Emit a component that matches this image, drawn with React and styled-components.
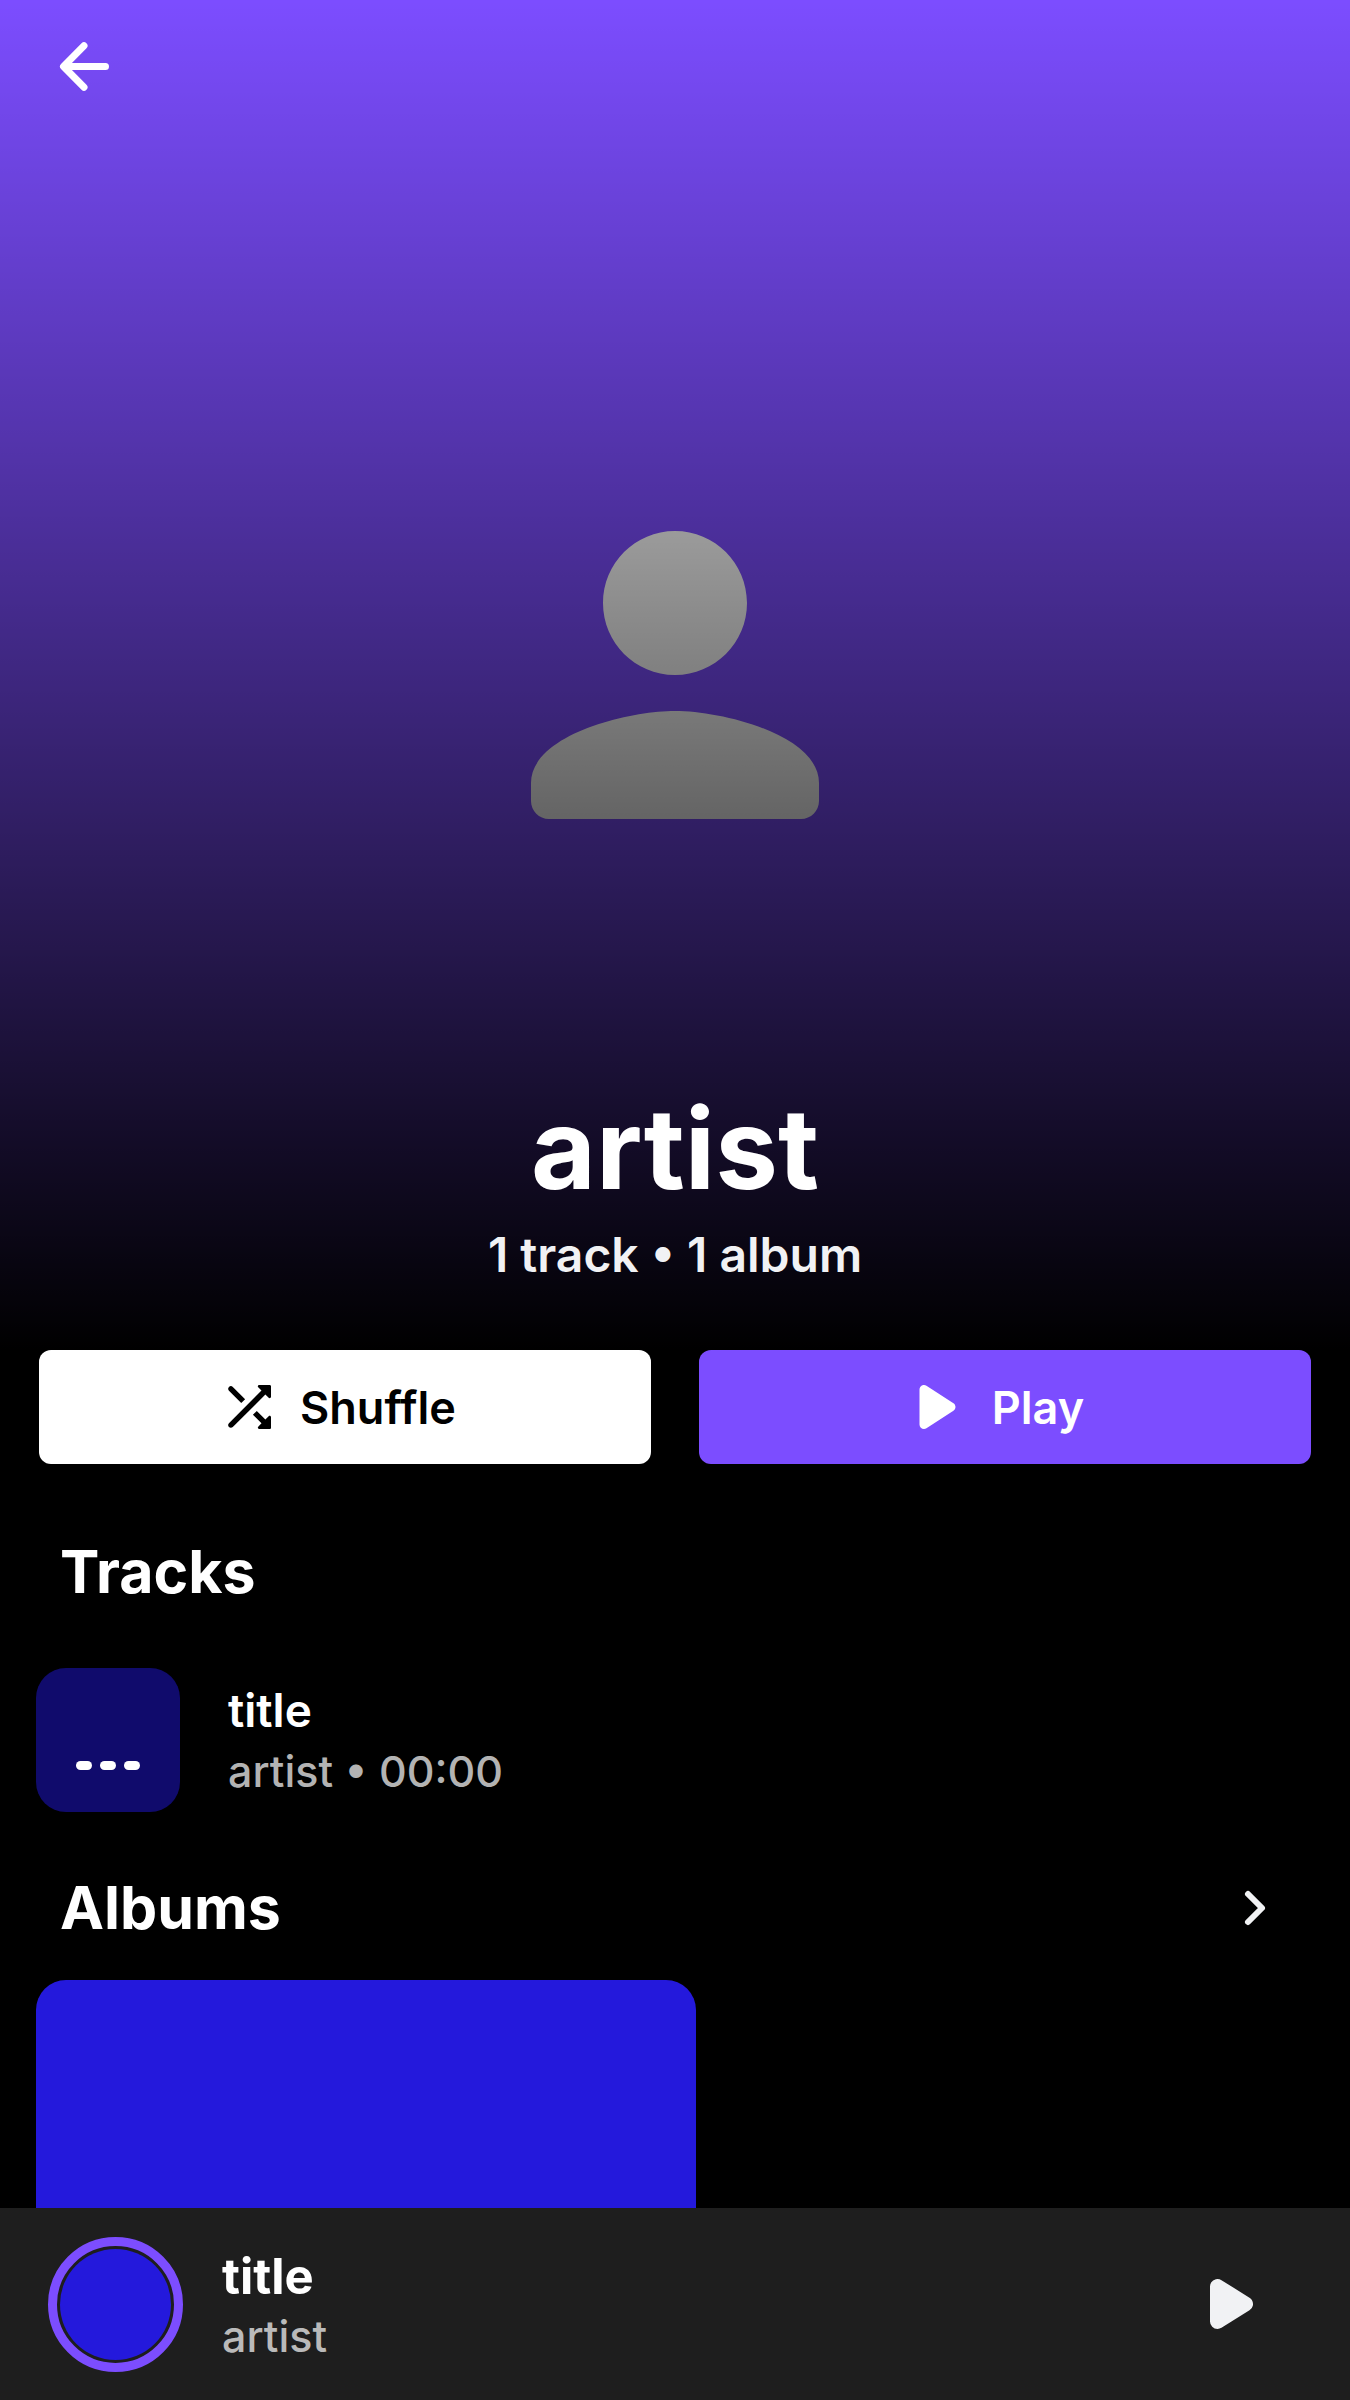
import React from "react";
import styled, { createGlobalStyle } from "styled-components";

const accent = "#7c4dff";
const cover = "#2419dc";

const GlobalStyle = createGlobalStyle`
  *, *::before, *::after { box-sizing: border-box; }
  body { margin: 0; background: #000; color: #fff; font-family: Inter, "Open Sans", sans-serif; }
  h1, h2, p { margin: 0; }
  button { font: inherit; color: inherit; border: 0; padding: 0; background: none; cursor: pointer; }
  svg { display: block; flex: none; }
`;

const Screen = styled.div`
  display: flex;
  flex-direction: column;
  height: 100vh;
`;

const Content = styled.main`
  flex: 1;
  min-height: 0;
  overflow-y: auto;
  scrollbar-width: none;
`;

const Hero = styled.header`
  display: grid;
  aspect-ratio: 1;
  background: ${accent};

  > * { grid-area: 1 / 1; }
`;

const Portrait = styled.svg`
  place-self: center;
  width: 32%;
`;

const Shade = styled.div`
  background: linear-gradient(to bottom, transparent, #000);
`;

const HeroBody = styled.div`
  display: flex;
  flex-direction: column;
  align-items: center;
  justify-content: space-between;
  padding: 30px 48px 62px;
`;

const IconButton = styled.button`
  && {
    display: flex;
    color: ${(p) => p.$color || "#fff"};
    align-self: ${(p) => p.$align || "center"};
  }
`;

const Heading = styled.div`
  text-align: center;
`;

const ArtistName = styled.h1`
  font-size: 112px;
  line-height: 148px;
  font-weight: 700;
`;

const Counts = styled.p`
  font-size: 48px;
  line-height: 66px;
  font-weight: 600;
  color: #f1f2f4;
`;

const Actions = styled.div`
  display: grid;
  grid-template-columns: 1fr 1fr;
  gap: 48px;
  padding: 0 39px 36px;
`;

const ActionButton = styled.button`
  && {
    display: flex;
    align-items: center;
    justify-content: center;
    gap: 18px;
    height: 114px;
    padding-right: 18px;
    border-radius: 12px;
    font-size: 45px;
    font-weight: 600;
    background: ${(p) => (p.$primary ? accent : "#fff")};
    color: ${(p) => (p.$primary ? "#fff" : "#000")};
  }
`;

const SectionHeader = styled.div`
  display: flex;
  align-items: center;
  justify-content: space-between;
  height: 144px;
  padding: 0 60px;
`;

const SectionTitle = styled.h2`
  font-size: 59px;
  line-height: 84px;
  font-weight: 700;
`;

const TrackRow = styled.button`
  && {
    display: flex;
    align-items: center;
    gap: 48px;
    width: 100%;
    padding: 24px 36px;
    text-align: left;
  }
`;

const TrackCover = styled.span`
  display: flex;
  align-items: flex-end;
  justify-content: center;
  gap: 8px;
  width: 144px;
  height: 144px;
  padding-bottom: 42px;
  border-radius: 30px;
  background: #100b6c;
`;

const Bar = styled.span`
  width: 16px;
  height: 9px;
  border-radius: 5px;
  background: #fff;
`;

const TextStack = styled.span`
  display: flex;
  flex-direction: column;
`;

const TrackTitle = styled.span`
  font-size: 46px;
  line-height: 62px;
  font-weight: 600;
`;

const TrackMeta = styled.span`
  font-size: 43px;
  line-height: 60px;
  font-weight: 500;
  color: #b3b3b3;
`;

const AlbumGrid = styled.div`
  display: grid;
  grid-template-columns: 660px;
  padding: 0 36px;
`;

const AlbumCover = styled.button`
  && {
    aspect-ratio: 1;
    border-radius: 30px;
    background: ${cover};
  }
`;

const MiniPlayer = styled.footer`
  display: flex;
  align-items: center;
  gap: 39px;
  height: 192px;
  padding: 0 83px 0 48px;
  background: #1e1e1e;
`;

const Disc = styled.div`
  width: 135px;
  height: 135px;
  padding: 3px;
  border: 9px solid ${accent};
  border-radius: 50%;

  &::before {
    content: "";
    display: block;
    height: 100%;
    border-radius: 50%;
    background: ${cover};
  }
`;

const NowPlaying = styled(TextStack)`
  flex: 1;
`;

const NowTitle = styled.span`
  font-size: 49px;
  line-height: 64px;
  font-weight: 700;
`;

const NowArtist = styled.span`
  font-size: 43px;
  line-height: 54px;
  font-weight: 500;
  color: #bababa;
`;

const BackIcon = () => (
  <svg width="72" height="72" viewBox="0 0 72 72" fill="none" stroke="currentColor" strokeWidth="7" strokeLinecap="round" strokeLinejoin="round">
    <path d="M57.5 36.5H17M36 15.7 15.5 36.5 36 57.3" />
  </svg>
);

const ChevronIcon = () => (
  <svg width="66" height="66" viewBox="0 0 66 66" fill="none" stroke="currentColor" strokeWidth="6" strokeLinecap="round" strokeLinejoin="round">
    <path d="M24 19 38 33 24 47" />
  </svg>
);

const ShuffleIcon = () => (
  <svg width="66" height="66" viewBox="0 0 24 24" fill="currentColor">
    <path d="M10.59 9.17 6.12 4.7a1 1 0 0 0-1.41 0c-.39.39-.39 1.02 0 1.41l4.46 4.46 1.42-1.4zm4.76-4.32 1.19 1.19L4.7 17.88c-.39.39-.39 1.02 0 1.41.39.39 1.02.39 1.41 0L17.96 7.46l1.19 1.19c.31.31.85.09.85-.36V4.5c0-.28-.22-.5-.5-.5h-3.79c-.45 0-.67.54-.36.85zm-.52 8.56-1.41 1.41 3.13 3.13-1.2 1.2c-.31.31-.09.85.36.85h3.79c.28 0 .5-.22.5-.5v-3.79c0-.45-.54-.67-.85-.35l-1.19 1.19-3.13-3.14z" />
  </svg>
);

const PlayIcon = () => (
  <svg width="66" height="66" viewBox="0 0 66 66" fill="currentColor" stroke="currentColor" strokeWidth="9" strokeLinejoin="round">
    <path d="M16 15.5V50.5L43 33Z" />
  </svg>
);

const RoundPlayIcon = () => (
  <svg width="72" height="72" viewBox="0 0 72 72" fill="currentColor" stroke="currentColor" strokeWidth="15" strokeLinejoin="round">
    <path d="M22.5 18.5V53.5L50.5 36Z" />
  </svg>
);

export default function App() {
  return (
    <Screen>
      <GlobalStyle />
      <Content>
        <Hero>
          <Portrait viewBox="0 0 24 24" fill="#fff" aria-hidden="true">
            <path d="M12 12c2.21 0 4-1.79 4-4s-1.79-4-4-4-4 1.79-4 4 1.79 4 4 4zm0 2c-2.67 0-8 1.34-8 4v1c0 .55.45 1 1 1h14c.55 0 1-.45 1-1v-1c0-2.66-5.33-4-8-4z" />
          </Portrait>
          <Shade />
          <HeroBody>
            <IconButton $align="flex-start" aria-label="Back"><BackIcon /></IconButton>
            <Heading>
              <ArtistName>artist</ArtistName>
              <Counts>1 track • 1 album</Counts>
            </Heading>
          </HeroBody>
        </Hero>
        <Actions>
          <ActionButton><ShuffleIcon />Shuffle</ActionButton>
          <ActionButton $primary><PlayIcon />Play</ActionButton>
        </Actions>
        <section>
          <SectionHeader><SectionTitle>Tracks</SectionTitle></SectionHeader>
          <TrackRow>
            <TrackCover><Bar /><Bar /><Bar /></TrackCover>
            <TextStack>
              <TrackTitle>title</TrackTitle>
              <TrackMeta>artist • 00:00</TrackMeta>
            </TextStack>
          </TrackRow>
        </section>
        <section>
          <SectionHeader>
            <SectionTitle>Albums</SectionTitle>
            <IconButton $color="#f1f2f4" aria-label="All albums"><ChevronIcon /></IconButton>
          </SectionHeader>
          <AlbumGrid><AlbumCover aria-label="Open album" /></AlbumGrid>
        </section>
      </Content>
      <MiniPlayer>
        <Disc />
        <NowPlaying>
          <NowTitle>title</NowTitle>
          <NowArtist>artist</NowArtist>
        </NowPlaying>
        <IconButton $color="#f1f2f4" aria-label="Play"><RoundPlayIcon /></IconButton>
      </MiniPlayer>
    </Screen>
  );
}
